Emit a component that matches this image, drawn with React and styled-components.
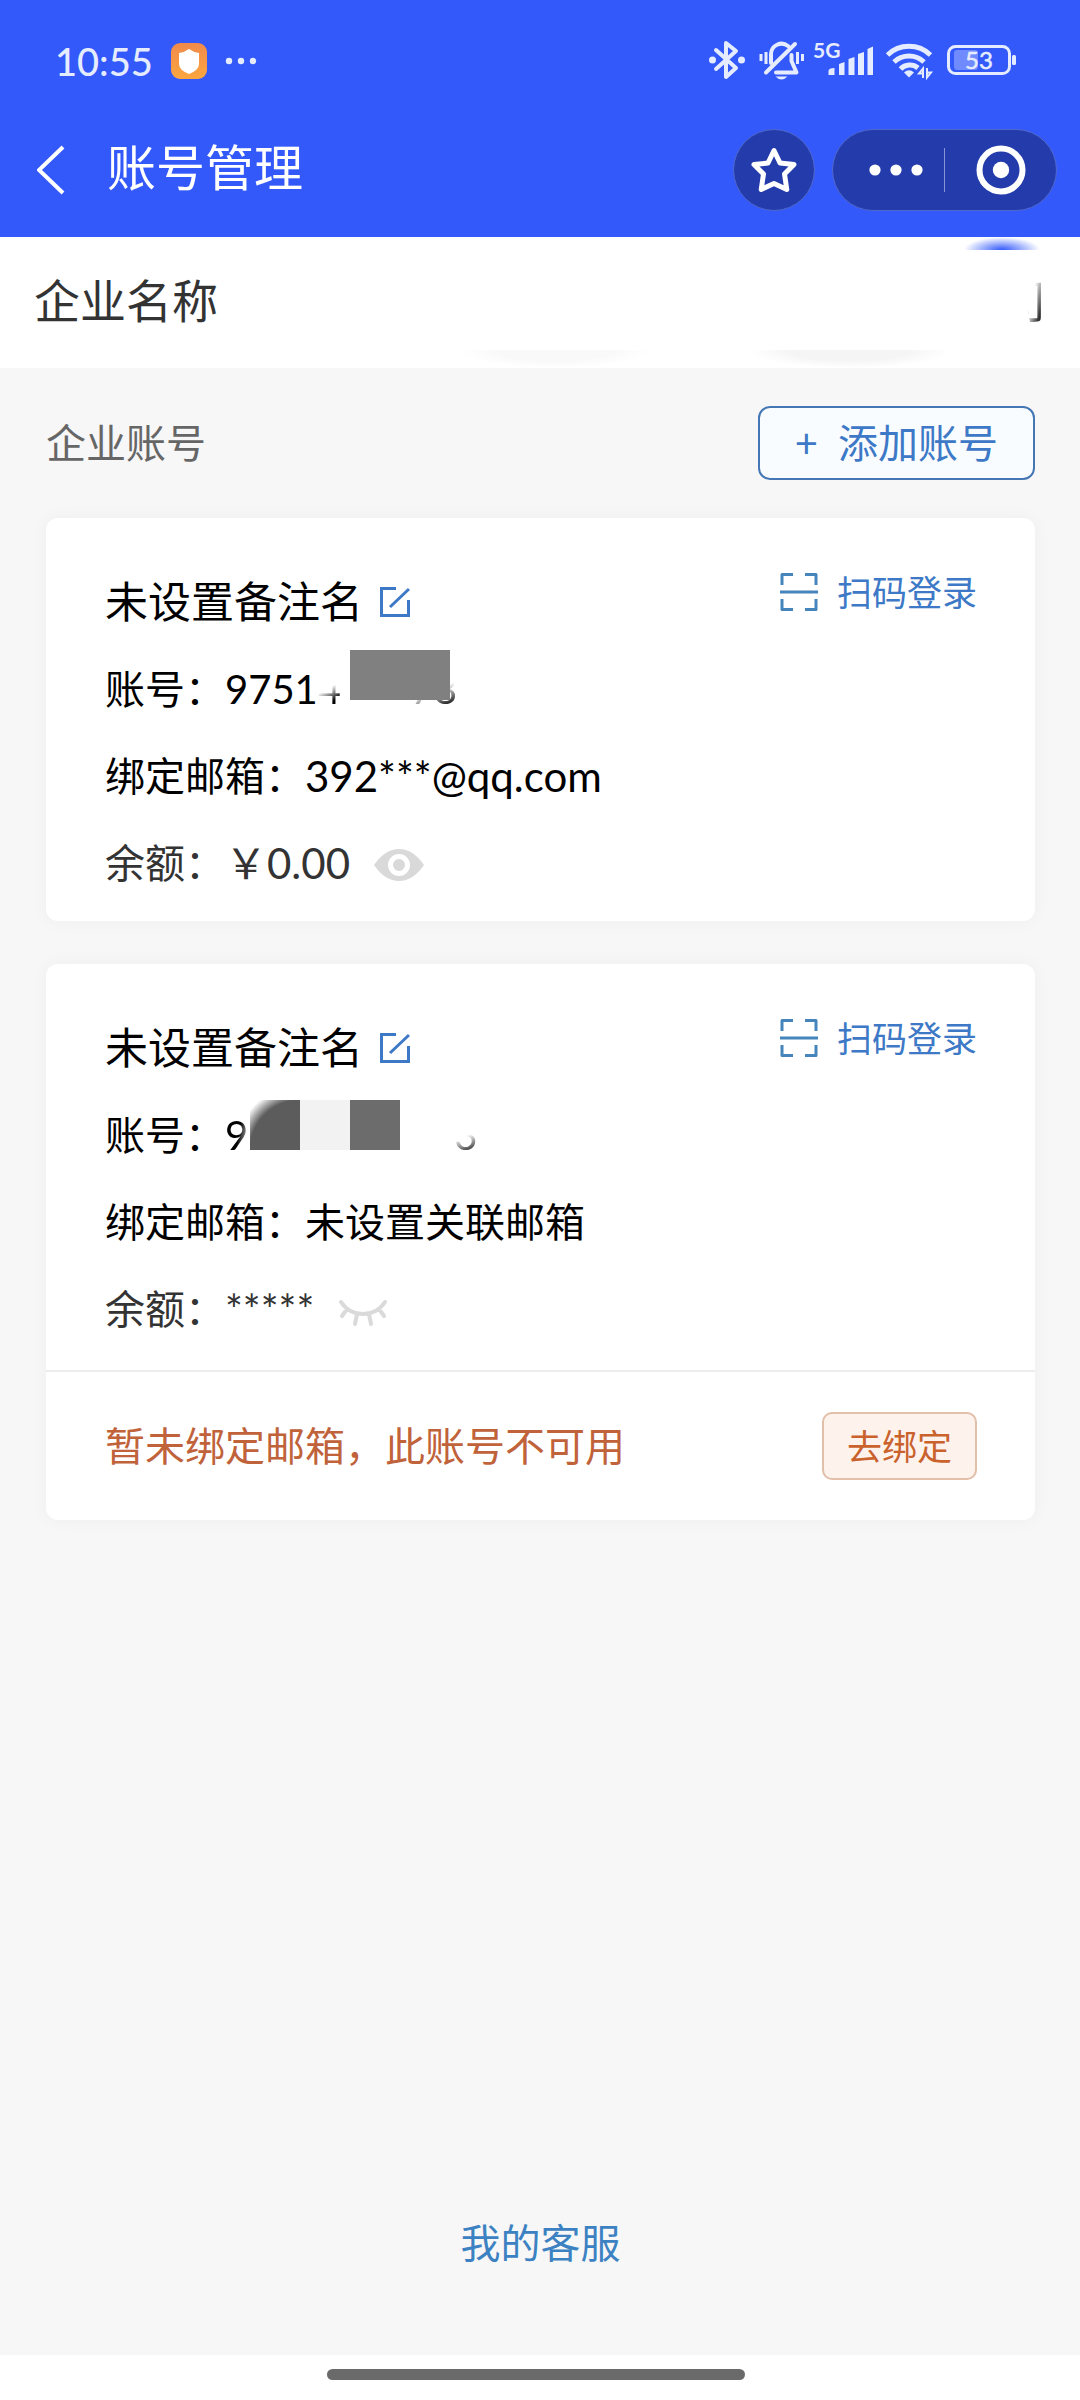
import React, { useState } from "react";
import styled, { createGlobalStyle } from "styled-components";

const COLORS = {
  PRIMARY: "#3359fa",
  PRIMARY_DARK: "#243cab",
  LINK: "#3d79c6",
  TEXT: "#000000",
  DARK: "#333333",
  GRAY: "#666666",
  LIGHT: "#f7f7f7",
  WHITE: "#ffffff",
  STATUS: "#e6ecff",
  WARNING: "#c0623a",
};

const ACCOUNTS = [
  {
    id: 1,
    name: "未设置备注名",
    visible: "9751",
    fading: "4",
    hidden: "000",
    tail: "78",
    blocks: ["#808080", "#808080"],
    blocksTop: 4,
    blocksLeft: 125,
    email: "392***@qq.com",
    latinEmail: true,
    balance: "￥0.00",
    shown: true,
  },
  {
    id: 2,
    name: "未设置备注名",
    visible: "",
    fading: "9",
    hidden: "00000000\u00a0\u00a0",
    tail: "3",
    blocks: ["#5c5c5c", "#f2f2f2", "#6c6c6c"],
    blocksTop: 8,
    blocksLeft: 25,
    email: "未设置关联邮箱",
    balance: "*****",
    shown: false,
    notice: "暂未绑定邮箱，此账号不可用",
  },
];

function StatusIcons() {
  return (
    <IconRow>
      <svg width="44" height="42" viewBox="0 0 44 42" fill="none">
        <path
          d="M9 10L29 28L19 37V3L29 11L9 29"
          stroke={COLORS.STATUS}
          strokeWidth="4"
          strokeLinejoin="round"
          strokeLinecap="round"
        />
        <circle cx="5.5" cy="20" r="3.5" fill={COLORS.STATUS} />
        <circle cx="34.5" cy="20" r="3.5" fill={COLORS.STATUS} />
      </svg>
      <svg width="46" height="42" viewBox="0 0 46 42" fill="none">
        <g stroke={COLORS.STATUS} strokeWidth="4" strokeLinecap="round">
          <path d="M12 23V14A10.5 10.5 0 0 1 29 6" />
          <path d="M36 4L7 32.5" />
          <path d="M32.5 15V21L37.5 32.5H17" strokeLinejoin="round" />
        </g>
        <path
          d="M2 14V21M7 12V24M38.5 12V24M43.5 14V21"
          stroke={COLORS.STATUS}
          strokeWidth="3"
        />
        <path d="M16.5 36.5H28.5Q22.5 42.5 16.5 36.5Z" fill={COLORS.STATUS} />
      </svg>
      <svg width="64" height="50" viewBox="0 -4 64 50" fill={COLORS.STATUS}>
        <text x="0" y="18" fontSize="21" fontWeight="700">
          5G
        </text>
        <path d="M15.5 35V31Q15.5 28 21.5 28V35Z" />
        <path d="M26 35V24L31.5 22V35Z" />
        <path d="M35.5 35V19L41.5 17V35Z" />
        <path d="M45 35V14L51 12V35Z" />
        <path d="M54.5 35V9L60 6.5V35Z" />
      </svg>
      <svg width="54" height="42" viewBox="0 0 54 42" fill="none">
        <g stroke={COLORS.STATUS} strokeWidth="5">
          <path d="M2.5 15A31 31 0 0 1 45.5 15" />
          <path d="M9 22A22 22 0 0 1 39 22" />
          <path d="M15.5 29A13 13 0 0 1 33 28" />
        </g>
        <path d="M19 32.5Q24 28 29 32.5L24 37.5Z" fill={COLORS.STATUS} />
        <path
          d="M38 38V28.5L34 33.5H37M42 28V37.5L46 32.5H43"
          stroke={COLORS.STATUS}
          strokeWidth="2"
        />
      </svg>
      <svg width="70" height="42" viewBox="0 0 70 42" fill="none">
        <rect x="7" y="10" width="24" height="20" rx="3" fill="#6f8bff" />
        <rect
          x="1.5"
          y="6.5"
          width="61"
          height="27"
          rx="7"
          stroke={COLORS.STATUS}
          strokeWidth="3"
        />
        <rect x="65" y="15" width="4" height="10" rx="1.5" fill={COLORS.STATUS} />
        <text
          x="32"
          y="29"
          fontSize="24"
          textAnchor="middle"
          fill={COLORS.STATUS}
          stroke={COLORS.STATUS}
          strokeWidth="0.5"
        >
          53
        </text>
      </svg>
    </IconRow>
  );
}

function EditIcon() {
  return (
    <svg width="30" height="30" viewBox="0 0 30 30" fill="none">
      <path
        d="M16 1.5H1.5V28.5H28.5V13M10 20L29 2"
        stroke={COLORS.LINK}
        strokeWidth="3"
      />
    </svg>
  );
}

function ScanIcon() {
  return (
    <svg width="40" height="40" viewBox="0 0 40 40" fill="none">
      <path
        d="M3 13V2.5H14M26 2.5H37V13M37 27V37.5H26M14 37.5H3V27M1 20H39"
        stroke="#4585bb"
        strokeWidth="3"
        strokeLinejoin="round"
      />
    </svg>
  );
}

function EyeIcon({ open }) {
  if (open) {
    return (
      <svg width="50" height="36" viewBox="0 0 50 36" fill="none">
        <path d="M0 19Q11 3 25 3T50 19Q39 35 25 35T0 19Z" fill="#d9d9d9" />
        <circle cx="25" cy="19" r="8.5" stroke={COLORS.WHITE} strokeWidth="5" />
      </svg>
    );
  }
  return (
    <svg width="50" height="36" viewBox="0 0 50 36" fill="none">
      <path
        d="M3 10Q11 22 25 22T47 10M9 17L4 24M19 22L17 32M31 22L33 32M41 17L46 24"
        stroke="#dadada"
        strokeWidth="4"
        strokeLinecap="round"
      />
    </svg>
  );
}

function AccountCard({ account }) {
  const [shown, setShown] = useState(account.shown);

  return (
    <Card>
      <CardBody $withNotice={Boolean(account.notice)}>
        <CardHead>
          <Name>
            {account.name}
            <IconButton type="button" aria-label="修改备注名">
              <EditIcon />
            </IconButton>
          </Name>
          <ScanLink href="#scan">
            <ScanIcon />
            扫码登录
          </ScanLink>
        </CardHead>
        <Row>
          账号：
          <Digits>
            {account.visible}
            <Fading $short={!account.visible}>{account.fading}</Fading>
            <Hidden aria-hidden="true">{account.hidden}</Hidden>
            <Tail>{account.tail}</Tail>
            <Blocks $top={account.blocksTop} $left={account.blocksLeft}>
              {account.blocks.map((color, index) => (
                <Block
                  key={index}
                  $color={color}
                  $soft={!account.visible && index === 0}
                />
              ))}
            </Blocks>
          </Digits>
        </Row>
        <Row>
          绑定邮箱：<Value $latin={account.latinEmail}>{account.email}</Value>
        </Row>
        <Row $muted>
          余额：<Value $latin>{account.balance}</Value>
          <EyeButton
            type="button"
            aria-label="显示余额"
            onClick={() => setShown(!shown)}
          >
            <EyeIcon open={shown} />
          </EyeButton>
        </Row>
      </CardBody>
      {account.notice && (
        <Notice>
          <span>{account.notice}</span>
          <BindButton type="button">去绑定</BindButton>
        </Notice>
      )}
    </Card>
  );
}

function App() {
  return (
    <Page>
      <GlobalStyle />
      <Header>
        <StatusBar>
          <Clock>
            <span>10:55</span>
            <svg width="36" height="36" viewBox="0 0 36 36">
              <defs>
                <linearGradient id="shield" x1="0" y1="0" x2="0" y2="1">
                  <stop offset="0" stopColor="#f08a4b" />
                  <stop offset="1" stopColor="#fba640" />
                </linearGradient>
              </defs>
              <rect width="36" height="36" rx="9" fill="url(#shield)" />
              <path
                d="M18 6Q22 9 28 10V21Q28 27 18 31Q8 27 8 21V10Q14 9 18 6Z"
                fill={COLORS.WHITE}
              />
            </svg>
            <svg width="32" height="8" viewBox="0 0 32 8" fill={COLORS.STATUS}>
              <circle cx="4" cy="4" r="3.2" />
              <circle cx="16" cy="4" r="3.2" />
              <circle cx="28" cy="4" r="3.2" />
            </svg>
          </Clock>
          <StatusIcons />
        </StatusBar>
        <NavBar>
          <IconButton type="button" aria-label="返回">
            <svg width="28" height="50" viewBox="0 0 28 50" fill="none">
              <path d="M26 2L2 25L26 48" stroke={COLORS.WHITE} strokeWidth="4" />
            </svg>
          </IconButton>
          <Title>账号管理</Title>
          <RoundButton type="button" aria-label="收藏">
            <svg width="48" height="48" viewBox="0 0 48 48" fill="none">
              <path
                d="M24 4.5L30 17L44 18.5L34.5 28L36.8 43.5L24 37.5L11.2 43.5L13.5 28L4 18.5L18 17Z"
                stroke={COLORS.WHITE}
                strokeWidth="5"
                strokeLinejoin="round"
              />
            </svg>
          </RoundButton>
          <Capsule>
            <CapsuleButton type="button" aria-label="更多">
              <svg width="54" height="12" viewBox="0 0 54 12" fill={COLORS.WHITE}>
                <circle cx="6" cy="6" r="5.6" />
                <circle cx="27" cy="6" r="5.6" />
                <circle cx="48" cy="6" r="5.6" />
              </svg>
            </CapsuleButton>
            <Divider />
            <CapsuleButton type="button" aria-label="关闭">
              <svg width="50" height="50" viewBox="0 0 50 50" fill="none">
                <circle cx="25" cy="25" r="21.5" stroke={COLORS.WHITE} strokeWidth="6" />
                <circle cx="25" cy="25" r="8.2" fill={COLORS.WHITE} />
              </svg>
            </CapsuleButton>
          </Capsule>
        </NavBar>
      </Header>

      <Company>
        <span>企业名称</span>
        <CompanyName>司</CompanyName>
        <BlueSmudge />
        <GraySmudge $right={430} $width={190} $color="#f9f9f9" />
        <GraySmudge $right={130} $width={200} $color="#f5f5f5" />
      </Company>

      <Main>
        <SectionHead>
          <SectionTitle>企业账号</SectionTitle>
          <AddButton type="button">
            <span>+</span>添加账号
          </AddButton>
        </SectionHead>
        {ACCOUNTS.map((account) => (
          <AccountCard key={account.id} account={account} />
        ))}
        <ServiceLink href="#service">我的客服</ServiceLink>
      </Main>

      <HomeBar>
        <HomeIndicator />
      </HomeBar>
    </Page>
  );
}

const GlobalStyle = createGlobalStyle`
  * {
    box-sizing: border-box;
  }
  body {
    margin: 0;
    background-color: ${COLORS.LIGHT};
    font-family: Lato, "Noto Sans CJK SC", sans-serif;
    font-size: 40px;
    line-height: 1.5;
  }
  button {
    font: inherit;
    padding: 0;
    border: none;
    background: none;
    cursor: pointer;
  }
  a {
    text-decoration: none;
  }
  svg {
    display: block;
    flex-shrink: 0;
  }
`;

const Page = styled.div`
  min-height: 100vh;
  display: flex;
  flex-direction: column;
`;

const Header = styled.header`
  background-color: ${COLORS.PRIMARY};
  color: ${COLORS.WHITE};
`;

const StatusBar = styled.div`
  display: flex;
  justify-content: space-between;
  align-items: center;
  height: 104px;
  padding: 18px 63px 0 55px;
  color: ${COLORS.STATUS};
`;

const Clock = styled.div`
  display: flex;
  align-items: center;
  gap: 18px;
  font-size: 38px;
  font-weight: 500;
`;

const IconRow = styled.div`
  display: flex;
  align-items: center;
  gap: 8px;
`;

const NavBar = styled.div`
  display: flex;
  align-items: center;
  height: 133px;
  padding: 0 23px 2px 37px;
`;

const Title = styled.h1`
  flex: 1;
  margin: 0 0 0 42px;
  padding-bottom: 6px;
  font-size: 49px;
  font-weight: 400;
  line-height: 60px;
`;

const IconButton = styled.button`
  display: flex;
  align-items: center;
`;

const RoundButton = styled.button`
  display: flex;
  align-items: center;
  justify-content: center;
  width: 82px;
  height: 82px;
  margin-right: 17px;
  border: 1px solid #5068cc;
  border-radius: 50%;
  background-color: ${COLORS.PRIMARY_DARK};
`;

const Capsule = styled.div`
  display: flex;
  align-items: center;
  width: 225px;
  height: 82px;
  border: 1px solid #5068cc;
  border-radius: 41px;
  background-color: ${COLORS.PRIMARY_DARK};
`;

const CapsuleButton = styled.button`
  width: 50%;
  display: flex;
  justify-content: center;

  &:first-child {
    padding-left: 14px;
  }
`;

const Divider = styled.span`
  width: 1px;
  height: 44px;
  background-color: #8794d6;
`;

const Company = styled.section`
  position: relative;
  display: flex;
  justify-content: space-between;
  align-items: center;
  height: 131px;
  padding: 0 34px 4px;
  overflow: hidden;
  background-color: ${COLORS.WHITE};
  color: ${COLORS.DARK};
  font-size: 46px;
`;

const CompanyName = styled.span`
  mask-image: linear-gradient(105deg, transparent 62%, black 82%);
`;

const BlueSmudge = styled.i`
  position: absolute;
  top: 0;
  right: 38px;
  width: 80px;
  height: 13px;
  background: radial-gradient(
    ellipse 38px 13px at 50% 100%,
    ${COLORS.PRIMARY} 0%,
    transparent 100%
  );
`;

const GraySmudge = styled.i`
  position: absolute;
  bottom: 0;
  right: ${({ $right }) => $right}px;
  width: ${({ $width }) => $width}px;
  height: 18px;
  background: radial-gradient(
    ellipse 50% 100% at 50% 0,
    ${({ $color }) => $color} 60%,
    transparent 100%
  );
`;

const Main = styled.main`
  flex: 1;
  display: flex;
  flex-direction: column;
  padding: 38px 45px 82px 46px;
`;

const SectionHead = styled.div`
  display: flex;
  justify-content: space-between;
  align-items: center;
  margin-bottom: 38px;
`;

const SectionTitle = styled.h2`
  margin: 0;
  color: ${COLORS.GRAY};
  font-size: 40px;
  font-weight: 400;
`;

const AddButton = styled.button`
  display: flex;
  align-items: center;
  gap: 20px;
  height: 74px;
  padding: 0 35px;
  border: 2px solid #4577b5;
  border-radius: 12px;
  background-color: #f9fcff;
  color: ${COLORS.LINK};
`;

const Card = styled.article`
  border-radius: 12px;
  background-color: ${COLORS.WHITE};
  box-shadow: 0 0 20px rgba(0, 0, 0, 0.04);

  & + & {
    margin-top: 43px;
  }
`;

const CardBody = styled.div`
  padding: 40px 58px ${({ $withNotice }) => ($withNotice ? 17 : 14)}px 59px;
`;

const CardHead = styled.div`
  display: flex;
  justify-content: space-between;
  align-items: flex-start;
`;

const Name = styled.h3`
  display: flex;
  align-items: center;
  gap: 17px;
  margin: 0;
  font-size: 43px;
  font-weight: 400;
  line-height: 88px;
`;

const ScanLink = styled.a`
  display: flex;
  align-items: center;
  gap: 18px;
  color: ${COLORS.LINK};
  font-size: 35px;
  line-height: 68px;
`;

const Row = styled.div`
  display: flex;
  align-items: center;
  line-height: 87px;
  color: ${({ $muted }) => ($muted ? COLORS.DARK : COLORS.TEXT)};
`;

const Value = styled.span`
  font-size: ${({ $latin }) => ($latin ? 42 : 40)}px;
`;

const Digits = styled.span`
  position: relative;
  display: flex;
`;

const Fading = styled.span`
  mask-image: ${({ $short }) =>
    $short
      ? "linear-gradient(100deg, black 55%, transparent 90%)"
      : "linear-gradient(150deg, transparent 48%, black 64%)"};
`;

const Hidden = styled.span`
  visibility: hidden;
`;

const Tail = styled.span`
  mask-image: linear-gradient(160deg, transparent 50%, black 72%);
`;

const Blocks = styled.span`
  position: absolute;
  top: ${({ $top }) => $top}px;
  left: ${({ $left }) => $left}px;
  display: flex;
`;

const Block = styled.i`
  width: 50px;
  height: 50px;
  background: ${({ $color, $soft }) =>
    $soft
      ? `radial-gradient(circle at 100% 100%, ${$color} 50px, ${COLORS.WHITE} 64px)`
      : $color};
`;

const EyeButton = styled(IconButton)`
  margin-left: 24px;
`;

const Notice = styled.div`
  display: flex;
  justify-content: space-between;
  align-items: center;
  height: 150px;
  padding: 0 58px 0 59px;
  border-top: 2px solid #ececec;
  color: ${COLORS.WARNING};
`;

const BindButton = styled.button`
  height: 68px;
  padding: 0 23px;
  border: 2px solid #e2bfa9;
  border-radius: 10px;
  background-color: #fdf2ec;
  color: #c9622c;
  font-size: 35px;
`;

const ServiceLink = styled.a`
  align-self: center;
  margin-top: auto;
  color: #3c82c2;
  line-height: 60px;
`;

const HomeBar = styled.footer`
  display: flex;
  justify-content: center;
  height: 45px;
  padding: 14px 8px 0 0;
  background-color: ${COLORS.WHITE};
`;

const HomeIndicator = styled.div`
  width: 418px;
  height: 11px;
  border-radius: 6px;
  background-color: #6a6a6a;
`;

export default App;
